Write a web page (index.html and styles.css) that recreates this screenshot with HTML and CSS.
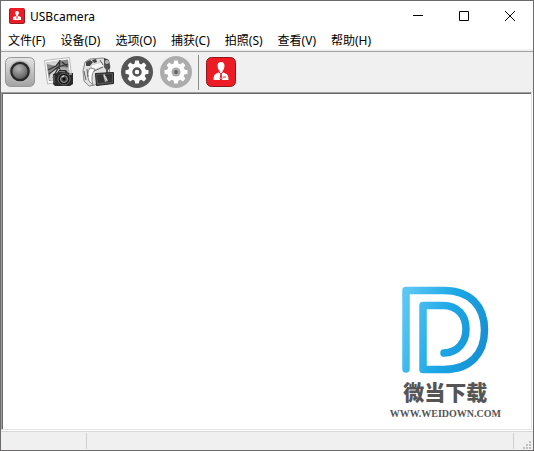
FILE: index.html
```html
<!DOCTYPE html>
<html lang="zh-CN">
<head>
<meta charset="utf-8">
<title>USBcamera</title>
<link rel="stylesheet" href="styles.css">
</head>
<body>
<div class="window">
  <header class="titlebar">
    <svg class="app-icon" viewBox="0 0 16 16" aria-hidden="true">
      <rect width="16" height="16" rx="2" fill="#8c2027"/>
      <rect x="1" width="14" height="15" rx="1" fill="#ed1c24"/>
      <circle cx="8" cy="5" r="2" fill="#fff"/>
      <path d="M7 6h2v2l3 1v3H4V9l3-1z" fill="#fff"/>
      <path d="M8 8v3" stroke="#ed1c24"/>
    </svg>
    <h1 class="title">USBcamera</h1>
    <div class="controls">
      <button class="control" aria-label="最小化"><svg viewBox="0 0 12 12"><path d="M1 5.500h10" /></svg></button>
      <button class="control" aria-label="最大化"><svg viewBox="0 0 12 12"><path d="M1.500 1.500h9v9h-9z"/></svg></button>
      <button class="control" aria-label="关闭"><svg viewBox="0 0 12 12"><path d="M1 1l10 10M11 1L1 11"/></svg></button>
    </div>
  </header>
  <nav class="menubar">
    <button class="menu">文件(F)</button>
    <button class="menu">设备(D)</button>
    <button class="menu">选项(O)</button>
    <button class="menu">捕获(C)</button>
    <button class="menu">拍照(S)</button>
    <button class="menu">查看(V)</button>
    <button class="menu">帮助(H)</button>
  </nav>
  <div class="toolbar">
    <button class="tool" aria-label="预览">
      <svg viewBox="0 0 32 32">
        <defs>
          <linearGradient id="plate" x2="0" y2="1"><stop stop-color="#e4e4e4"/><stop offset="1" stop-color="#a2a2a2"/></linearGradient>
          <radialGradient id="lens" cx=".42" cy=".35" r=".65"><stop stop-color="#b4b4b4"/><stop offset=".6" stop-color="#7c7c7c"/><stop offset="1" stop-color="#555"/></radialGradient>
        </defs>
        <rect x="1.500" y="1.500" width="29" height="29" rx="5" fill="url(#plate)" stroke="#979797"/>
        <circle cx="16" cy="15.500" r="11" fill="#b5b5b5"/>
        <circle cx="16" cy="15.500" r="8.700" fill="url(#lens)" stroke="#292929" stroke-width="2.200"/>
        <path d="M11 13q1-3 5-3.500" fill="none" stroke="#aaa"/>
      </svg>
    </button>
    <button class="tool" aria-label="拍照">
      <svg viewBox="0 0 32 32">
        <path d="M1.500 4.500L26.500 1.500 29 24 4.500 28z" fill="#fafafa" stroke="#bbb"/>
        <path d="M3.500 6.500L25 3.500l2 18.500L6 25z" fill="#858585"/>
        <path d="M4 8l9 2 4-6-13 2.500zM8 15l7-3 3 4-6 9-6-1z" fill="#d5d5d5"/>
        <path d="M5 14l8-4 4-5M6 18l9-7 10-3M17 4l-1 8 6 4M10 22l5-10M19 6l6 5" fill="none" stroke="#333" stroke-width="1.300"/>
        <path d="M17 11l7 1 2-4v8h-8z" fill="#b0b0b0"/>
        <path d="M10 18l4-1 2-3h7l2 3h5v11l-3 2H12l-2-2z" fill="#292929"/>
        <path d="M11 19v8M16 15.500h6" stroke="#777"/>
        <circle cx="21" cy="23" r="6" fill="#171717" stroke="#686868"/>
        <circle cx="21" cy="23" r="3.500" fill="#444" stroke="#999"/>
        <circle cx="21" cy="23" r="1.500" fill="#0c0c0c"/>
        <path d="M19 21l2-1M26 18h3" stroke="#eee"/>
      </svg>
    </button>
    <button class="tool" aria-label="录像">
      <svg viewBox="0 0 32 32">
        <path d="M3 6l5-3 13-1 5 2 2 6-1 8-14 11-6 1-5-5-1-10z" fill="#e0e0e0" stroke="#888"/>
        <path d="M4 6l4-2 3 2-3 4H4zM10 4l4-1 1 3-3 1zM22 2l5 2 1 8-3 3-3-4z" fill="#444"/>
        <path d="M9 9l11-3 2 4-12 5z" fill="#f8f8f8" stroke="#ccc"/>
        <path d="M8 12q-4 5-1 13l4 4q-3-9 2-16z" fill="#fff" stroke="#888"/>
        <path d="M2 15l2 9M5 13l1 8M12 15l9-4M23 4v7M18 4l3 5" fill="none" stroke="#666"/>
        <circle cx="25" cy="6" r="2" fill="#bbb"/>
        <path d="M25 9v8" stroke="#555" stroke-width="2"/>
        <path d="M13.500 17.500l18-1v11l-17 2z" fill="#555" stroke="#222"/>
        <path d="M15 19l15-1v8l-14 1z" fill="#343434"/>
        <path d="M21 19l3 1 2 5-3 1z" fill="#aaa"/>
        <path d="M22 18l1 4 2 2" stroke="#ddd" fill="none"/>
      </svg>
    </button>
    <button class="tool" aria-label="选项">
      <svg viewBox="0 0 32 32">
        <defs>
          <g id="gear">
            <circle cx="16" cy="16" r="8.800"/>
            <g id="teeth">
              <path d="M14.200 4.500h3.600l1 5h-5.600zM14.200 27.500h3.600l1-5h-5.600zM4.500 14.200v3.600l5 1v-5.600zM27.500 14.200v3.600l-5 1v-5.600z"/>
            </g>
            <use href="#teeth" transform="rotate(45 16 16)"/>
          </g>
        </defs>
        <circle cx="16" cy="16" r="16" fill="#555"/>
        <use href="#gear" fill="#fff"/>
        <circle cx="16" cy="16" r="3.500" fill="#fff" stroke="#555" stroke-width="2.500"/>
      </svg>
    </button>
    <button class="tool" aria-label="设置">
      <svg viewBox="0 0 32 32">
        <circle cx="16" cy="16" r="16" fill="#acacac"/>
        <use href="#gear" fill="#fff"/>
        <circle cx="16" cy="16" r="4.500" fill="#aaa"/>
        <circle cx="16" cy="16" r="2" fill="#666"/>
      </svg>
    </button>
    <span class="divider"></span>
    <button class="tool" aria-label="关于">
      <svg viewBox="0 0 32 32">
        <rect x="1.500" y="1.500" width="29" height="29" rx="5" fill="#ed1c24" stroke="#8e171b"/>
        <path d="M12.500 10q0-4 3.500-4t3.500 4q0 3-2 5v1l4 2q2 1 2 6h-15q0-5 2-6l4-2v-1q-2-2-2-5z" fill="#fff"/>
        <path d="M14 16l2 2-1 5 1 1 1-1-1-5 2-2" fill="none" stroke="#ed1c24"/>
        <path d="M18 21h3" stroke="#ed1c24"/>
      </svg>
    </button>
  </div>
  <main class="view">
    <div class="brand">
      <svg class="brand-logo" viewBox="0 0 88 88" aria-hidden="true">
        <defs><linearGradient id="blue" gradientUnits="userSpaceOnUse" x1="0" y1="30" x2="88" y2="55"><stop stop-color="#5bc6f4"/><stop offset=".5" stop-color="#1ca7e6"/><stop offset="1" stop-color="#168fd2"/></linearGradient></defs>
        <path d="M5 83V4.500H43C69 4.500 83.500 20 83.500 44S69 83.500 43 83.500H22V19.500H42C57 19.500 65 30 65 43S57 66.500 43 67" fill="none" stroke="url(#blue)" stroke-width="7.500" stroke-linecap="round" stroke-linejoin="round"/>
      </svg>
      <strong class="brand-name">微当下载</strong>
      <span class="brand-url">WWW.WEIDOWN.COM</span>
    </div>
  </main>
  <footer class="statusbar">
    <span class="pane pane-first"></span>
    <span class="pane pane-fill"></span>
    <svg class="grip" viewBox="0 0 8 8" aria-hidden="true"><path d="M6 0h2v2H6zM3 3h2v2H3zM6 3h2v2H6zM0 6h2v2H0zM3 6h2v2H3zM6 6h2v2H6z"/></svg>
  </footer>
</div>
</body>
</html>
```
FILE: styles.css
```css
* { box-sizing: border-box; }

body {
  margin: 0;
  font-family: "Noto Sans", "Noto Sans CJK SC", sans-serif;
  font-size: 12px;
  color: #000;
}

button {
  padding: 0;
  border: 0;
  background: none;
  font: inherit;
  color: inherit;
}

svg { display: block; }

.window {
  display: flex;
  flex-direction: column;
  min-height: 100vh;
  border: 1px solid #6c6a6b;
  background: #fff;
}

.titlebar {
  display: flex;
  align-items: center;
  height: 30px;
  padding-left: 8px;
}

.app-icon { width: 16px; height: 16px; }

.title {
  margin: 0 0 0 5px;
  font-size: 12px;
  font-weight: 400;
}

.controls {
  display: flex;
  height: 100%;
  margin-left: auto;
}

.control {
  display: grid;
  place-items: center;
  width: 46px;
}

.control svg {
  width: 12px;
  height: 12px;
  fill: none;
  stroke: #000;
}

.menubar {
  display: flex;
  gap: 15px;
  height: 20px;
  padding: 1px 0 0 7px;
  border-bottom: 2px solid #f0f0f0;
  line-height: 18px;
}

.menu { white-space: nowrap; }

.toolbar {
  display: flex;
  align-items: center;
  gap: 7px;
  height: 41px;
  padding-left: 3px;
  border-top: 1px solid #a0a0a0;
  background: #f0f0f0;
}

.tool svg { width: 32px; height: 32px; }

.divider {
  width: 1px;
  height: 35px;
  margin: 0 -1px;
  background: #8c8c8c;
}

.view {
  display: flex;
  flex: 1;
  align-items: flex-end;
  justify-content: flex-end;
  margin-right: 1px;
  padding: 0 30px 10px 0;
  border: 1px solid #e3e3e3;
  border-top-color: #a0a0a0;
  border-left-color: #a0a0a0;
  box-shadow: inset 1px 1px #696969;
}

.brand {
  display: flex;
  flex-direction: column;
  align-items: center;
  color: #555;
}

.brand-logo { width: 88px; height: 88px; }

.brand-name {
  font-family: "Noto Sans CJK SC", sans-serif;
  font-size: 21px;
  font-weight: 900;
  line-height: 34px;
}

.brand-url {
  font-family: "Liberation Serif", serif;
  font-size: 10px;
  font-weight: 700;
  line-height: 11px;
}

.statusbar {
  display: flex;
  height: 19px;
  margin-top: 1px;
  padding: 1px 2px 1px 0;
  border-top: 1px solid #d7d7d7;
  background: #f0f0f0;
}

.pane { border-right: 1px solid #d0d0d0; }
.pane-first { width: 86px; }
.pane-fill { flex: 1; }

.grip {
  align-self: flex-end;
  width: 8px;
  height: 8px;
  margin-left: 9px;
  fill: #bfbfbf;
}
```
